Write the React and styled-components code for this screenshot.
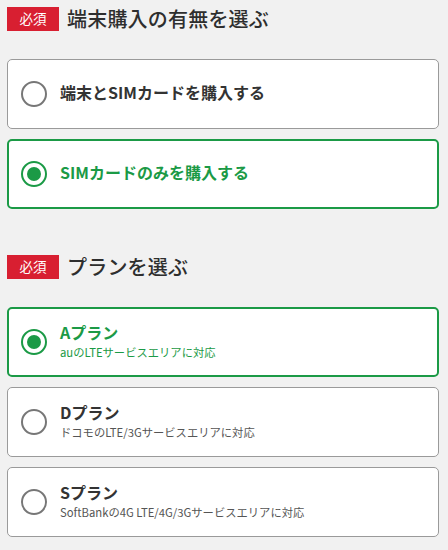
import React from 'react'
import styled, { createGlobalStyle } from 'styled-components'

const GREEN = '#1b9a46'

const GlobalStyle = createGlobalStyle`
  html, body {
    margin: 0;
    padding: 0;
    background: #f1f1f1;
  }
  body {
    font-family: "Noto Sans CJK JP", "Noto Sans", sans-serif;
    color: #333;
  }
`

const Page = styled.div`
  width: 448px;
  padding: 7px 9px 14px 7px;
  box-sizing: border-box;
`

const Section = styled.section`
  display: flex;
  flex-direction: column;
  margin-bottom: ${props => props.last ? '0' : '46px'};
`

const Heading = styled.div`
  display: flex;
  align-items: center;
  gap: 8px;
  height: 24px;
  margin-bottom: 28px;
`

const Badge = styled.span`
  display: flex;
  align-items: center;
  justify-content: center;
  width: 52px;
  height: 24px;
  background: #d81f31;
  color: #fff;
  font-size: 13.5px;
  line-height: 1;
`

const Title = styled.h2`
  margin: 0;
  font-size: 20px;
  font-weight: 500;
  color: #2e2e2e;
  line-height: 1;
  letter-spacing: 0.2px;
`

const Options = styled.div`
  display: flex;
  flex-direction: column;
  gap: 10px;
`

const Card = styled.label`
  display: flex;
  align-items: center;
  gap: 13px;
  height: 70px;
  box-sizing: border-box;
  padding: 0 0 0 ${props => props.selected ? '12px' : '13px'};
  background: #fff;
  border: ${props => props.selected ? `2px solid ${GREEN}` : '1.5px solid #9a9a9a'};
  border-radius: 5px;
  cursor: pointer;
`

const Radio = styled.span`
  flex: none;
  display: flex;
  align-items: center;
  justify-content: center;
  width: 26px;
  height: 26px;
  box-sizing: border-box;
  border-radius: 50%;
  border: 2px solid ${props => props.selected ? GREEN : '#777'};
  background: #fff;

  &::after {
    content: '';
    display: ${props => props.selected ? 'block' : 'none'};
    width: 14px;
    height: 14px;
    border-radius: 50%;
    background: ${GREEN};
  }
`

const Texts = styled.div`
  display: flex;
  flex-direction: column;
  gap: 3px;
  margin-top: -2px;
`

const Label = styled.div`
  font-size: 16px;
  font-weight: 700;
  line-height: 1.2;
  color: ${props => props.selected ? GREEN : '#333'};
`

const Note = styled.div`
  font-size: 11.3px;
  line-height: 1.3;
  color: ${props => props.selected ? GREEN : '#555'};
`

const Option = ({ selected, label, note }) => (
  <Card selected={selected}>
    <Radio selected={selected} />
    <Texts>
      <Label selected={selected}>{label}</Label>
      {note && <Note selected={selected}>{note}</Note>}
    </Texts>
  </Card>
)

const purchase = [
  { label: '端末とSIMカードを購入する' },
  { label: 'SIMカードのみを購入する', selected: true },
]

const plans = [
  { label: 'Aプラン', note: 'auのLTEサービスエリアに対応', selected: true },
  { label: 'Dプラン', note: 'ドコモのLTE/3Gサービスエリアに対応' },
  { label: 'Sプラン', note: 'SoftBankの4G LTE/4G/3Gサービスエリアに対応' },
]

export default function App() {
  return (
    <Page>
      <GlobalStyle />
      <Section>
        <Heading>
          <Badge>必須</Badge>
          <Title>端末購入の有無を選ぶ</Title>
        </Heading>
        <Options>
          {purchase.map(o => <Option key={o.label} {...o} />)}
        </Options>
      </Section>
      <Section last>
        <Heading>
          <Badge>必須</Badge>
          <Title>プランを選ぶ</Title>
        </Heading>
        <Options>
          {plans.map(o => <Option key={o.label} {...o} />)}
        </Options>
      </Section>
    </Page>
  )
}
